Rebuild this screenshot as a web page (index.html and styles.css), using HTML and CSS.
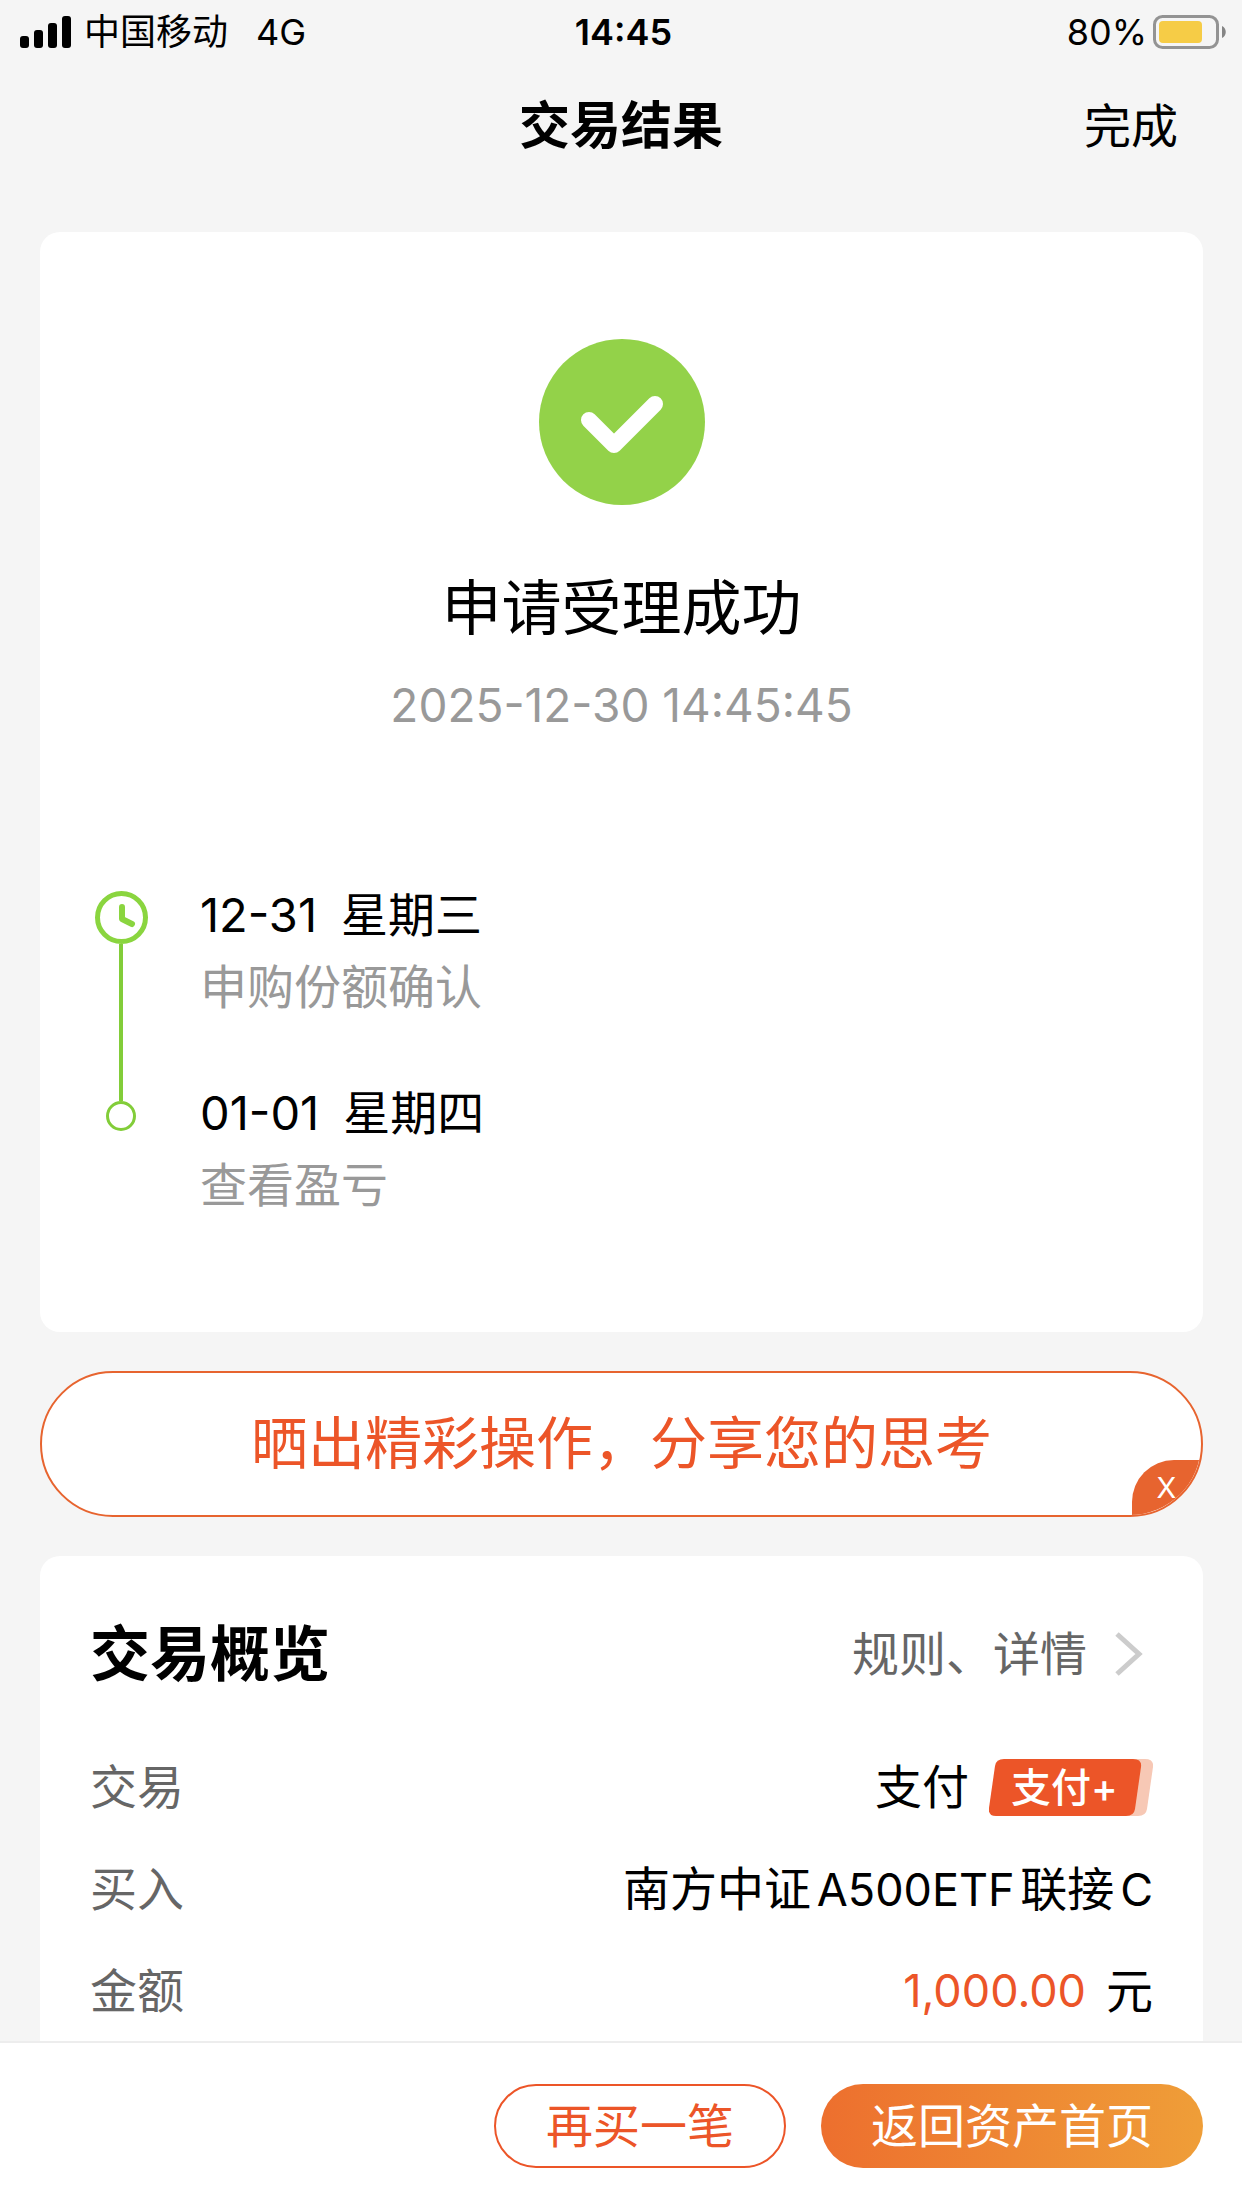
FILE: index.html
```html
<!DOCTYPE html>
<html lang="zh-CN">
<head>
	<meta charset="utf-8">
	<meta name="viewport" content="width=device-width">
	<title>交易结果</title>
	<link rel="stylesheet" href="styles.css">
</head>
<body>
<div class="status">
	<div class="status-left">
		<svg class="signal" viewBox="0 0 51 32">
			<rect x="0" y="20" width="9" height="12" rx="3"/>
			<rect x="14" y="14" width="9" height="18" rx="3"/>
			<rect x="28" y="7" width="9" height="25" rx="3"/>
			<rect x="42" y="0" width="9" height="32" rx="3"/>
		</svg>
		<span class="carrier">中国移动</span>
		<span>4G</span>
	</div>
	<div class="time">14:45</div>
	<div class="status-right">
		<span>80%</span>
		<svg class="battery" viewBox="0 0 74 34">
			<rect x="1.5" y="1.5" width="63" height="31" rx="8" fill="none" stroke="#939393" stroke-width="3"/>
			<rect x="6" y="6" width="43" height="22" rx="4" fill="#f6cc46"/>
			<path d="M69 11c5 2 5 10 0 12z" fill="#858585"/>
		</svg>
	</div>
</div>
<div class="nav">
	<h1>交易结果</h1>
	<a class="done" href="#">完成</a>
</div>
<div class="main">
	<div class="card result">
		<svg class="ok" viewBox="0 0 166 166">
			<circle cx="83" cy="83" r="83" fill="#93d249"/>
			<path d="M50 81l25 25 41-41" fill="none" stroke="#fff" stroke-width="16" stroke-linecap="round" stroke-linejoin="round"/>
		</svg>
		<h2>申请受理成功</h2>
		<p class="date">2025-12-30 14:45:45</p>
		<ul class="steps">
			<li>
				<div class="mark">
					<svg class="clock" viewBox="0 0 53 53">
						<circle cx="26.5" cy="26.5" r="24" fill="none" stroke="#8ad53f" stroke-width="5"/>
						<path d="M27 16v12l10 5" fill="none" stroke="#8ad53f" stroke-width="6" stroke-linecap="round" stroke-linejoin="round"/>
					</svg>
					<div class="line"></div>
				</div>
				<div>
					<div class="day"><span>12-31</span><span>星期三</span></div>
					<div class="what">申购份额确认</div>
				</div>
			</li>
			<li>
				<div class="mark">
					<div class="dot"></div>
				</div>
				<div>
					<div class="day"><span>01-01</span><span>星期四</span></div>
					<div class="what">查看盈亏</div>
				</div>
			</li>
		</ul>
	</div>
	<div class="share">
		<button type="button" class="share-btn">晒出精彩操作，分享您的思考</button>
		<button type="button" class="close">X</button>
	</div>
	<div class="card info">
		<div class="info-head">
			<h2>交易概览</h2>
			<a class="more" href="#">规则、详情
				<svg class="arrow" viewBox="0 0 28 44"><path d="M2 2l22 20L2 42" fill="none" stroke="#ccc" stroke-width="5"/></svg>
			</a>
		</div>
		<dl>
			<div class="row">
				<dt>交易</dt>
				<dd>
					<span>支付</span>
					<span class="tag">
						<svg class="tag-bg" viewBox="0 0 164 57">
							<path d="M21 0H156q9 0 8 8l-6 42q-1 7-9 7H20z" fill="#f7c8b5"/>
							<path d="M15 0H144q9 0 8 8l-6 42q-1 7-9 7H7q-8 0-7-8L6 7q1-7 9-7z" fill="#ec5528"/>
						</svg>
						<span class="tag-text">支付+</span>
					</span>
				</dd>
			</div>
			<div class="row">
				<dt>买入</dt>
				<dd class="fund">南方中证<span class="num">A500ETF</span>联接<span class="num">C</span></dd>
			</div>
			<div class="row">
				<dt>金额</dt>
				<dd><span class="num money">1,000.00</span><span>元</span></dd>
			</div>
		</dl>
	</div>
</div>
<div class="foot">
	<button type="button" class="btn">再买一笔</button>
	<button type="button" class="btn btn-main">返回资产首页</button>
</div>
</body>
</html>
```
FILE: styles.css
```css
*{
	box-sizing: border-box;
	margin: 0;
	padding: 0;
}
body{
	display: flex;
	flex-direction: column;
	height: 100vh;
	background: #f5f5f5;
	color: #000;
	font-family: Inter, "Noto Sans CJK SC", sans-serif;
	font-size: 47px;
	line-height: 60px;
}
button{
	font: inherit;
	cursor: pointer;
}
a{
	color: inherit;
	text-decoration: none;
}
ul{
	list-style: none;
}
svg{
	display: block;
	flex: none;
}
.num{
	font-size: 45px;
}
/* 状态栏 */
.status{
	display: grid;
	grid-template-columns: 1fr auto 1fr;
	align-items: center;
	height: 60px;
	padding: 2px 15px 0 20px;
	font-size: 36px;
}
.status-left,.status-right{
	display: flex;
	align-items: center;
}
.status-right{
	justify-content: flex-end;
	gap: 6px;
}
.signal{
	width: 51px;
	height: 32px;
	margin-right: 13px;
}
.carrier{
	margin-right: 28px;
}
.time{
	font-weight: 600;
}
.battery{
	width: 74px;
	height: 34px;
}
/* 标题栏 */
.nav{
	display: grid;
	grid-template-columns: 1fr auto 1fr;
	align-items: center;
	height: 132px;
	padding: 0 64px;
}
.nav h1{
	grid-column: 2;
	font-size: 51px;
	font-weight: 700;
}
.done{
	justify-self: end;
}
.main{
	flex: 1;
	min-height: 0;
	padding: 40px 39px 0 40px;
	overflow: auto;
	scrollbar-width: none;
}
.card{
	border-radius: 20px;
	background: #fff;
}
.card h2{
	font-size: 60px;
	line-height: 80px;
}
.result{
	padding: 107px 50px 117px;
}
.ok{
	width: 166px;
	height: 166px;
	margin: 0 auto 63px;
}
.result h2{
	margin-bottom: 27px;
	font-weight: 400;
	text-align: center;
}
.date{
	margin-bottom: 150px;
	color: #999;
	font-size: 46px;
	text-align: center;
}
.steps li{
	display: flex;
	gap: 48px;
	min-height: 198px;
}
.steps li:last-child{
	min-height: 0;
}
.mark{
	display: flex;
	flex-direction: column;
	align-items: center;
	width: 62px;
	padding-top: 6px;
}
.clock{
	width: 53px;
	height: 53px;
}
.line{
	flex: 1;
	width: 4px;
	margin-bottom: -18px;
	background: #82cd39;
}
.dot{
	width: 30px;
	height: 30px;
	margin-top: 12px;
	border: 3px solid #82cd39;
	border-radius: 50%;
}
.day{
	display: flex;
	gap: 24px;
	margin-bottom: 12px;
}
.what{
	color: #999;
}
/* 分享 */
.share{
	position: relative;
	margin: 39px 0;
	border: 2px solid #e7642f;
	border-radius: 73px;
	background: #fff;
	overflow: hidden;
}
.share-btn{
	display: block;
	width: 100%;
	height: 142px;
	border: 0;
	background: none;
	color: #ec5528;
	font-size: 57px;
}
.close{
	position: absolute;
	right: 0;
	bottom: 0;
	width: 69px;
	height: 55px;
	border: 0;
	border-radius: 42px 0 0 0;
	background: #e7642f;
	color: #fff;
	font-size: 29px;
	line-height: 55px;
}
/* 交易概览 */
.info{
	padding: 58px 50px 56px;
}
.info-head{
	display: flex;
	justify-content: space-between;
	align-items: center;
	margin-bottom: 42px;
}
.more{
	display: flex;
	align-items: center;
	gap: 28px;
	padding-right: 10px;
	color: #666;
}
.arrow{
	width: 28px;
	height: 44px;
}
.row{
	display: flex;
	justify-content: space-between;
	align-items: center;
	height: 102px;
}
.row dt{
	color: #666;
}
.row dd{
	display: flex;
	align-items: center;
	gap: 20px;
}
.row .fund{
	display: block;
	text-autospace: normal;
}
.money{
	color: #ec5528;
}
.tag{
	display: grid;
	width: 164px;
}
.tag-bg,.tag-text{
	grid-area: 1 / 1;
}
.tag-text{
	padding-left: 22px;
	color: #fff;
	font-size: 40px;
	font-weight: 500;
	line-height: 57px;
}
/* 底部按钮 */
.foot{
	display: flex;
	justify-content: flex-end;
	gap: 35px;
	padding: 41px 39px 40px;
	border-top: 2px solid #ededed;
	background: #fff;
}
.btn{
	height: 84px;
	padding: 0 50px;
	border: 2px solid #ec5528;
	border-radius: 42px;
	background: #fff;
	color: #ec5528;
}
.btn-main{
	border: 0;
	background: linear-gradient(90deg, #ed6f2e, #ef9e38);
	color: #fff;
}
```
